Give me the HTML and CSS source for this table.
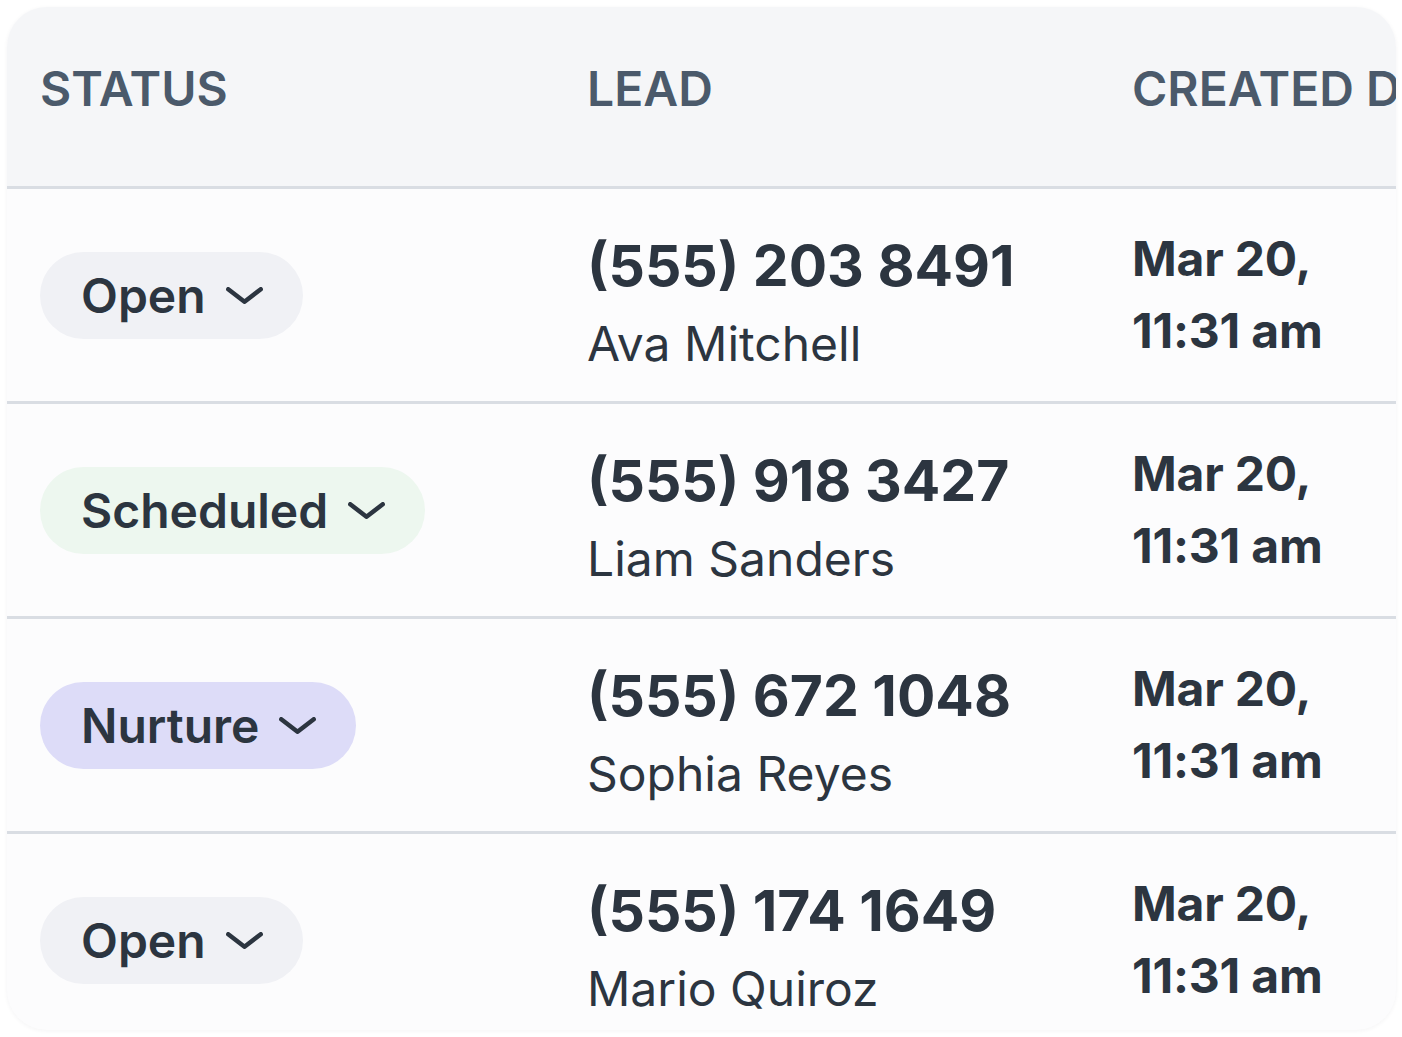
FILE: index.html
```html
<!DOCTYPE html>
<html lang="en">
<head>
<meta charset="utf-8">
<title>Leads</title>
<link rel="stylesheet" href="styles.css">
</head>
<body>
<div class="card">
  <div class="row head">
    <div class="cell th">STATUS</div>
    <div class="cell th">LEAD</div>
    <div class="cell th">CREATED DATE</div>
  </div>
  <div class="row">
    <div class="cell"><span class="pill pill-open">Open <svg class="chev" viewBox="0 0 37 17"><polyline points="2.25,2.25 18.5,14.75 34.75,2.25"/></svg></span></div>
    <div class="cell lead"><div class="phone">(555) 203 8491</div><div class="name">Ava Mitchell</div></div>
    <div class="cell date">Mar 20,<br>11:31 am</div>
  </div>
  <div class="row">
    <div class="cell"><span class="pill pill-sched">Scheduled <svg class="chev" viewBox="0 0 37 17"><polyline points="2.25,2.25 18.5,14.75 34.75,2.25"/></svg></span></div>
    <div class="cell lead"><div class="phone">(555) 918 3427</div><div class="name">Liam Sanders</div></div>
    <div class="cell date">Mar 20,<br>11:31 am</div>
  </div>
  <div class="row">
    <div class="cell"><span class="pill pill-nurture">Nurture <svg class="chev" viewBox="0 0 37 17"><polyline points="2.25,2.25 18.5,14.75 34.75,2.25"/></svg></span></div>
    <div class="cell lead"><div class="phone">(555) 672 1048</div><div class="name">Sophia Reyes</div></div>
    <div class="cell date">Mar 20,<br>11:31 am</div>
  </div>
  <div class="row last">
    <div class="cell"><span class="pill pill-open">Open <svg class="chev" viewBox="0 0 37 17"><polyline points="2.25,2.25 18.5,14.75 34.75,2.25"/></svg></span></div>
    <div class="cell lead"><div class="phone">(555) 174 1649</div><div class="name">Mario Quiroz</div></div>
    <div class="cell date">Mar 20,<br>11:31 am</div>
  </div>
</div>
</body>
</html>
```
FILE: styles.css
```css
html, body {
  margin: 0;
  padding: 0;
  background: #ffffff;
}
body {
  padding: 7px 6px 7px 7px;
  font-family: Inter, "Noto Sans", sans-serif;
  color: #2c3540;
}
.card {
  width: 1389px;
  height: 1023px;
  border-radius: 40px;
  overflow: hidden;
  background: #fcfcfd;
  box-shadow: 0 1px 4px rgba(30, 40, 60, 0.05);
}
.row {
  display: grid;
  grid-template-columns: 547px 545px 600px;
  height: 212px;
  border-bottom: 3px solid #d9dde3;
  align-items: center;
  white-space: nowrap;
}
.row.last {
  border-bottom: none;
}
.row.head {
  height: 179px;
  background: #f5f6f8;
  align-items: start;
}
.cell {
  padding-left: 33px;
}
.th {
  padding-top: 52px;
  font-size: 48px;
  line-height: 60px;
  font-weight: 600;
  color: #4b5a6b;
}
.pill {
  display: inline-flex;
  align-items: center;
  gap: 20px;
  height: 87px;
  padding: 0 40px 0 41px;
  border-radius: 44px;
  font-size: 48px;
  font-weight: 600;
  color: #2c3540;
  box-sizing: border-box;
}
.pill-open { background: #f0f1f5; }
.pill-sched { background: #edf7ef; }
.pill-nurture { background: #dddcf8; }
.chev {
  width: 37px;
  height: 17px;
  fill: none;
  stroke: #2c3540;
  stroke-width: 4.5;
  stroke-linecap: round;
  stroke-linejoin: round;
}
.lead {
  padding-top: 20px;
}
.phone {
  font-size: 57px;
  line-height: 72px;
  font-weight: 700;
}
.name {
  font-size: 48px;
  line-height: 72px;
  margin-top: 6px;
  font-weight: 400;
}
.date {
  font-size: 48px;
  line-height: 72px;
  font-weight: 700;
  letter-spacing: -0.2px;
}
```
